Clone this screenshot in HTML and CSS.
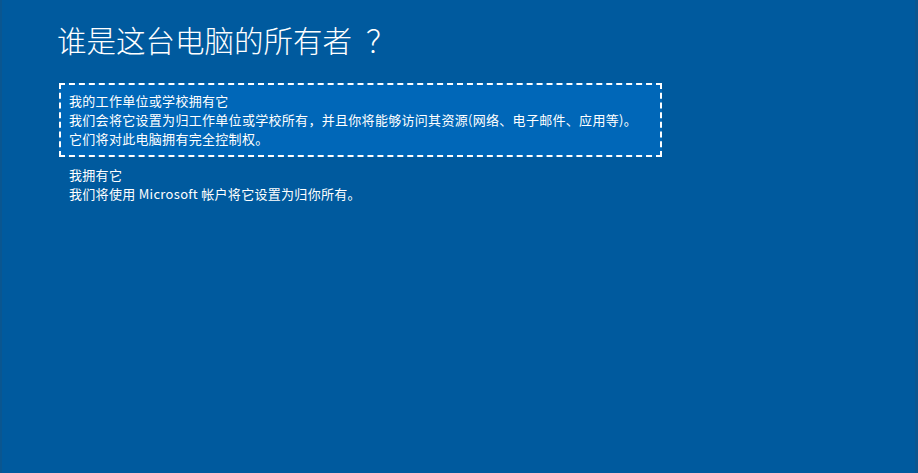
FILE: index.html
```html
<!DOCTYPE html>
<html lang="zh-CN">
<head>
<meta charset="utf-8">
<link rel="stylesheet" href="styles.css">
</head>
<body>
<div class="screen">
  <h1 class="title">谁是这台电脑的所有者<span class="qmark">？</span></h1>
  <div class="options">
    <div class="option selected">
      <div class="opt-title">我的工作单位或学校拥有它</div>
      <div class="opt-desc">我们会将它设置为归工作单位或学校所有<span class="comma">，</span>并且你将能够访问其资源(网络、电子邮件、应用等)。<br>它们将对此电脑拥有完全控制权。</div>
    </div>
    <div class="option">
      <div class="opt-title">我拥有它</div>
      <div class="opt-desc">我们将使用 Microsoft 帐户将它设置为归你所有。</div>
    </div>
  </div>
</div>
</body>
</html>
```
FILE: styles.css
```css
html, body {
  margin: 0;
  padding: 0;
  height: 100%;
}
body {
  background: #005a9e;
  font-family: "Noto Sans CJK SC", "Noto Sans", sans-serif;
  color: #ffffff;
  text-spacing-trim: space-all;
}
.screen {
  height: 100%;
  box-sizing: border-box;
  padding: 17px 0 0 57px;
  border-left: 2px solid #0a5690;
  border-right: 3px solid #0a5690;
}
.title {
  margin: 0 0 0 -2px;
  font-size: 29.5px;
  font-weight: 300;
  line-height: 44px;
}
.qmark {
  font-family: "Noto Sans CJK TC", sans-serif;
  margin-left: 14px;
}
.options {
  margin-top: 22px;
  width: 603px;
  display: flex;
  flex-direction: column;
}
.option {
  padding: 6px 8px 7px 8px;
  border: 2px dashed transparent;
}
.option.selected {
  background: #0067b8;
  border: 2px dashed #ffffff;
}
.opt-title, .opt-desc {
  font-size: 13px;
  letter-spacing: 0.3px;
  line-height: 19px;
}
.comma {
  font-family: "Noto Sans CJK TC", sans-serif;
}
```
